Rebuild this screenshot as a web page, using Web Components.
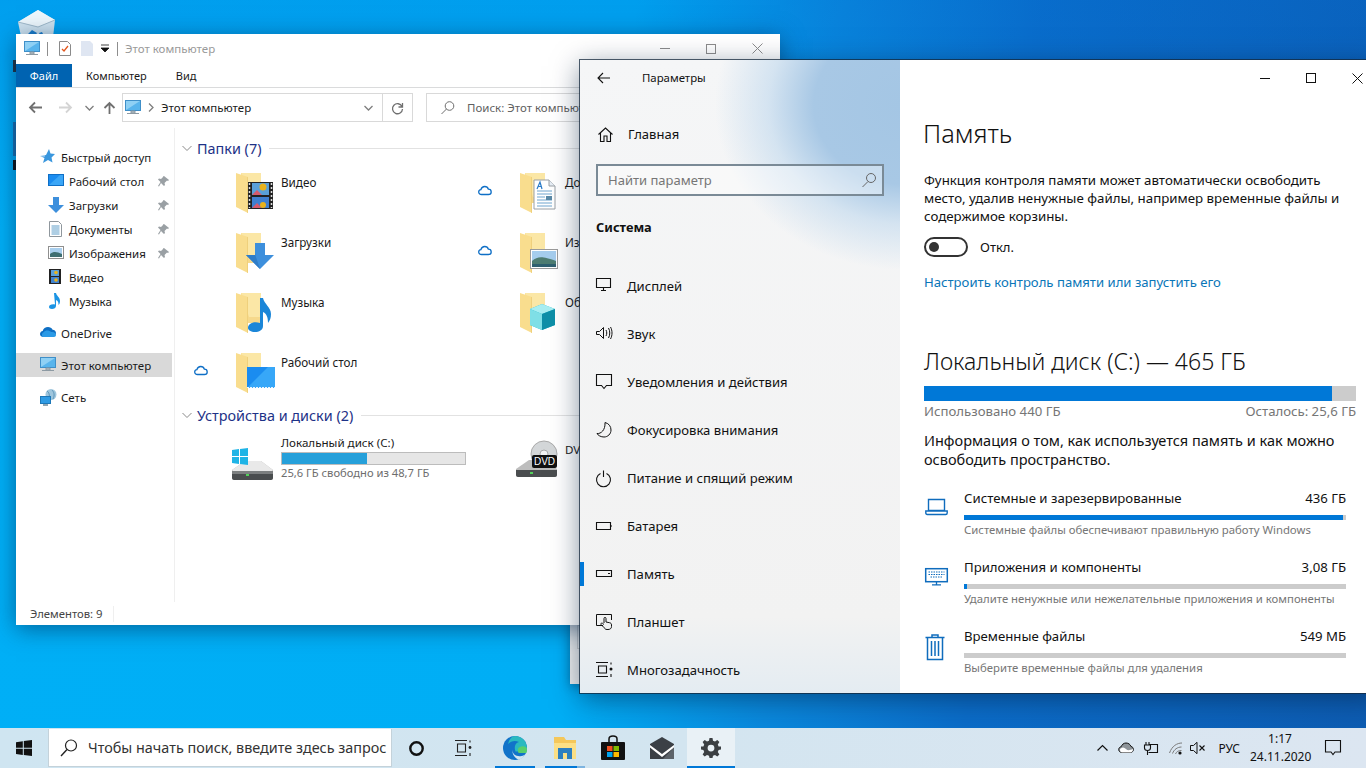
<!DOCTYPE html>
<html lang="ru">
<head>
<meta charset="utf-8">
<title>Параметры</title>
<style>
  html, body { margin: 0; height: 100%; overflow: hidden; }
  body { font-family: "Noto Sans", "Open Sans", sans-serif; }
</style>
</head>
<body>
<win-desktop>
  <explorer-window></explorer-window>
  <settings-window></settings-window>
  <win-taskbar></win-taskbar>
</win-desktop>

<script>
const FOLDER = `
  <path d="M5 0h20v30H5z" fill="#f6d98c"/>
  <path d="M5 0h20v24H13z" fill="#fbe7a6"/>
  <path d="M0 0l12 4v36l-12-6z" fill="#f9dd8e"/>
  <path d="M12 4v36l-1-.5V4z" fill="#efd07c"/>`;

const ICONS = {
  // folders with their overlay, the folder starts at 0,0
  video: `${FOLDER}<rect x="12" y="9" width="25" height="27" fill="#222"/><rect x="16" y="10" width="17" height="12" fill="#5aa0d8"/><rect x="16" y="24" width="17" height="11" fill="#3f7fd0"/><circle cx="27" cy="14" r="3.5" fill="#e9b21c"/><path d="M16 22l5-5 5 5zM16 35l5-5 5 5z" fill="#d65a6c"/><circle cx="27" cy="32" r="3" fill="#e9b21c"/><path d="M13.5 10v25M35.5 10v25" stroke="#ddd" stroke-width="1.5" stroke-dasharray="2 2"/>`,
  download: `${FOLDER}<path d="M19 10h10v12h9L24 36 10 22h9z" fill="#3d8fdc"/><path d="M24 36L10 22h9v-1" fill="#2f7dc8"/>`,
  music: `${FOLDER}<path d="M24 5h3c1 6 8 9 8 16 0 4-1 6-3 9 0-5-1-9-5-11v14c0 4-4 6-8 6s-7-2-7-4c0-4 5-7 12-5z" fill="#1b86d8"/>`,
  desktop: `${FOLDER}<rect x="11" y="14" width="28" height="21" fill="#1a8cf0"/><path d="M11 35L32 14h7v21z" fill="#37a7f8"/><path d="M11 34.500h28" stroke="#e8f4ff" stroke-dasharray="2 1"/>`,
  docs: `${FOLDER}<path d="M14 7h15l6 6v23H14z" fill="#fff" stroke="#9aa0a6"/><path d="M29 7v6h6" fill="#e7eef6" stroke="#9aa0a6"/><path d="M17 18h15M17 21h15M17 24h8M17 27h15M17 30h15M17 33h15" stroke="#6ea5cf"/><rect x="26" y="23" width="6" height="4" fill="#5a8aa8"/><path d="M17 16l3-7 2 7M18 13.500h3" fill="none" stroke="#2a7bc8" stroke-width="1.200"/>`,
  pictures: `${FOLDER}<rect x="10.500" y="16.500" width="27" height="19" fill="#fff" stroke="#9b9b9b"/><rect x="12" y="18" width="24" height="16" fill="#a5cdee"/><path d="M12 28c6-5 10-5 24 0v6H12z" fill="#4e7d72"/><path d="M12 31h24v3H12z" fill="#2f6070"/>`,
  objects: `${FOLDER}<path d="M22 11l13 5v16l-13 5-12-5V16z" fill="#25b5c9"/><path d="M22 11l13 5-13 5-12-5z" fill="#a8eef2"/><path d="M10 16l12 5v16l-12-5z" fill="#7fdfe6"/><path d="M22 21l13-5v16l-13 5z" fill="#0e8fa8"/>`,
  // drives
  drive: `<path d="M1 22L14 13h16l12 9v8c0 1-1 2-2 2H3c-1 0-2-1-2-2z" fill="#b9b9b9"/><path d="M1 22L14 13h16l12 9-1 1H2z" fill="#e9e9e9"/><path d="M1 23h41v7c0 1-1 2-2 2H3c-1 0-2-1-2-2z" fill="#4a4d4f"/><path d="M1 23l41 0v3H1z" fill="#7c7f80"/><rect x="15" y="26" width="3" height="2" fill="#52d05a"/>
    <g fill="#1fb4e6"><path d="M1 2l7-1v7H1zM9 1l8-1v8H9zM1 9h7v7l-7-1zM9 9h8v8l-8-1z"/></g>`,
  dvd: `<path d="M1 29L14 20h16l12 9v6c0 1-1 2-2 2H3c-1 0-2-1-2-2z" fill="#bdbdbd"/><path d="M1 30h41v5c0 1-1 2-2 2H3c-1 0-2-1-2-2z" fill="#4a4d4f"/><rect x="15" y="32" width="3" height="2" fill="#52d05a"/><circle cx="29" cy="14" r="13" fill="#d4d7d9"/><circle cx="29" cy="14" r="13" fill="none" stroke="#aaa"/><circle cx="29" cy="14" r="4" fill="#f4f4f4" stroke="#aaa"/><rect x="17" y="15" width="25" height="13" rx="2" fill="#111"/><text x="29.500" y="25" font-size="10" text-anchor="middle" fill="#fff" font-family="Liberation Sans,sans-serif">DVD</text>`,
  // explorer small
  pc: `<rect x=".5" y=".5" width="15" height="10" fill="#8fd0f4" stroke="#3f8fc8"/><path d="M1 10L15 1v9z" fill="#58b4ec"/><path d="M6 11h4v2H6zM2 13.500h12" stroke="#8d9aa3" fill="#b6c2ca"/>`,
  checkdoc: `<path d="M.5.500h8l3 3v11H.5z" fill="#fff" stroke="#8a8a8a"/><path d="M3 8l2 2 4-5" fill="none" stroke="#e2571e" stroke-width="1.300"/>`,
  fadedoc: `<path d="M0 0h9l3 3v12H0z" fill="#dfe6f2"/>`,
  star: `<path d="M9 0l1.500 4.500L15 5l-3.500 3.500 1 5L8 11l-5 3 1.500-5L0 7l6-1z" fill="#3a97de"/><path d="M0 7h5M0 10h3" stroke="#fff" stroke-width=".7"/>`,
  desk16: `<rect x=".5" y="1.500" width="15" height="11" fill="#1a8cf0" stroke="#0f6fc6"/><path d="M1 12L12 2h3v10z" fill="#3aa6f7"/>`,
  down16: `<path d="M5 0h6v8h5l-8 8-8-8h5z" fill="#3d8fdc"/>`,
  doc16: `<path d="M1.500.500h9l3 3v12h-12z" fill="#fff" stroke="#8f979d"/><path d="M3.500 5h8M3.500 7h8M3.500 9h8M3.500 11h8M3.500 13h8" stroke="#5f9ec9"/>`,
  pic16: `<rect x=".5" y="1.500" width="15" height="12" fill="#fff" stroke="#8f8f8f"/><rect x="2" y="3" width="12" height="9" fill="#a9cfee"/><path d="M2 9c4-3 7-2 12 0v3H2z" fill="#3f6f72"/>`,
  film16: `<rect x="1" y="0" width="12" height="15" fill="#222"/><rect x="3" y="1" width="8" height="6" fill="#5aa0d8"/><rect x="3" y="8" width="8" height="6" fill="#4083cf"/><circle cx="8" cy="3.500" r="1.800" fill="#e9b21c"/><circle cx="8" cy="11" r="1.800" fill="#e9b21c"/>`,
  note16: `<path d="M6 0h2c.5 3 4 4 4 8 0 2-.5 3-1.500 4 0-3-.5-4-2.500-5v6c0 2-2 3-4 3s-3-1-3-2c0-2 2.500-3 6-2.500z" fill="#1b94e4"/>`,
  onedrive: `<path d="M3.500 12C1.500 12 0 10.700 0 9c0-1.500 1.200-2.800 2.700-3C3.300 3.500 5.500 2 8 2c2 0 3.800 1 4.600 2.700C14.600 4.800 16 6.300 16 8c0 2.200-1.800 4-4 4z" fill="#0e6fc4"/><path d="M3 12c-1.500-1-1.500-4 1-5 1-2 5-2 7 0 3-.5 5 1 5 3 0 1-1 2-2 2z" fill="#2b9ae6"/>`,
  network: `<ellipse cx="11" cy="5.500" rx="5.500" ry="5.500" fill="#9fc6dd"/><path d="M7 2c2 1 3 4 2 8M12 1c2 2 3 5 1 9" stroke="#5f96ba" fill="none"/><rect x=".5" y="7.500" width="10" height="7" fill="#2f9be4" stroke="#1d78b8"/><path d="M3 16h5" stroke="#6b8797" stroke-width="1.500"/>`,
  pin: `<path d="M6 1l5 4-1 1-1-.5-2.500 2.500.5 2-1 1L3 8 1 11.500 0 11l2.500-4L0 4.500l1-1 2 .5L5.500 1.500 5 1z" fill="#9aa0a4"/>`,
  cloud: `<path d="M3.500 9.500C1.800 9.500.7 8.400.7 7c0-1.300 1-2.300 2.200-2.400C3.400 2.700 4.900 1.500 6.700 1.500c1.800 0 3.200 1.100 3.700 2.700 1.500 0 2.800 1.200 2.800 2.700s-1.200 2.600-2.800 2.600z" fill="#fff" stroke="#0f6fc6" stroke-width="1.300"/>`,
  // explorer chrome
  back: `<path d="M1 6.500h12M6 1.500l-5 5 5 5" fill="none" stroke="#707070" stroke-width="1.800"/>`,
  fwd: `<path d="M12 6.500H0M7 1.500l5 5-5 5" fill="none" stroke="#d4d4d4" stroke-width="1.800"/>`,
  up: `<path d="M6.500 13V2M1.500 7l5-5 5 5" fill="none" stroke="#707070" stroke-width="1.800"/>`,
  chevdown: `<path d="M.5 1l4 4 4-4" fill="none" stroke="#7e7e7e" stroke-width="1.300"/>`,
  chevright: `<path d="M1 .5l4 4-4 4" fill="none" stroke="#7e7e7e" stroke-width="1.300"/>`,
  sectchev: `<path d="M.5 1l4.500 4.500L9.500 1" fill="none" stroke="#8a8a8a"/>`,
  refresh: `<path d="M11 5.500A5 5 0 1 0 11.500 8M11.500 2v4h-4" fill="none" stroke="#707070" stroke-width="1.300"/>`,
  search: `<circle cx="8.500" cy="5" r="4.300" fill="none" stroke="#6e6e6e"/><path d="M5.500 8L.5 13" stroke="#6e6e6e"/>`,
  qadrop: `<path d="M0 0h8M0 3h8L4 7z" stroke="#111" fill="#111" stroke-width=".8"/>`,
  wmin: `<path d="M0 .5h10" stroke="currentColor"/>`,
  wmax: `<rect x=".5" y=".5" width="9" height="9" fill="none" stroke="currentColor"/>`,
  wclose: `<path d="M.5.500l10 10M10.500.500l-10 10" stroke="currentColor" fill="none"/>`,
  // settings nav
  sback: `<path d="M13 6H1M6 1L1 6l5 5" fill="none" stroke="#111" stroke-width="1.100"/>`,
  home: `<path d="M.5 7.500L7.500 1l7 6.500M2.500 6v8.500h3.500V9h3v5.500h3.500V6" fill="none" stroke="#111" stroke-width="1.100"/>`,
  display: `<path d="M.5.500h14v9H.5zM5 12.500h5M7.500 9.500v3" fill="none" stroke="#111" stroke-width="1.100"/>`,
  sound: `<path d="M.5 5.500h3L7.500 1.500v11l-4-4h-3zM10 4c1 2 1 4 0 6M12.500 2c1.700 3 1.700 7 0 10M14.500 1c2 3.500 2 8.500 0 12" fill="none" stroke="#111"/>`,
  notif: `<path d="M.5.500h15v11h-5l-2.500 3-2.500-3h-5z" fill="none" stroke="#111" stroke-width="1.100"/>`,
  moon: `<path d="M9 .5c4 1 6 4 6 7.500 0 4-3.200 7-7 7-3 0-6-1.500-7-3.500 4 .5 8.500-3.500 8-11z" fill="none" stroke="#111"/>`,
  power: `<path d="M4.500 3.500a7 7 0 1 0 6 0M7.500.5V7" fill="none" stroke="#111" stroke-width="1.100"/>`,
  battery: `<path transform="translate(0 4)" d="M.5.500h14v7H.5zM15 3v2" fill="none" stroke="#111" stroke-width="1.100"/>`,
  storage: `<path transform="translate(0 4)" d="M.5.500h15v6H.5zM12 3.500h2" fill="none" stroke="#111" stroke-width="1.100"/>`,
  tablet: `<path d="M7 11.500H.5V.5h15V6M8 9V4.500c0-1.500 2-1.500 2 0V8l3.500.7c1.500.3 2 1 2 2.300v1.500c0 2-1.500 3-3.500 3h-1c-1.500 0-2.500-1-3-2L5 10.500c-.5-1 .8-2 1.500-1.200L8 10.500" fill="none" stroke="#111"/>`,
  multitask: `<path d="M0 .5h12M0 14.500h12M2.500 4h8v7h-8zM15 .5v2M15 12v3" fill="none" stroke="#111" stroke-width="1.100"/><circle cx="15" cy="7" r="1.500" fill="#111"/>`,
  magn: `<circle cx="9" cy="5" r="4.500" fill="none" stroke="#666"/><path d="M6 8.500L.5 14" stroke="#666"/>`,
  // storage rows
  laptop: `<path d="M3.500.500h16v11h-16zM.8 12h21.400v2c0 .8-.5 1.500-1.500 1.500H2.300c-1 0-1.500-.7-1.500-1.500z" fill="none" stroke="#0f6cbd" stroke-width="1.400"/>`,
  apps: `<rect x=".7" y=".7" width="21.600" height="13" fill="none" stroke="#0f6cbd" stroke-width="1.500"/><path d="M3.500 4h16M3.500 6.500h16M5.500 9h12" stroke="#0f6cbd" stroke-dasharray="1.500 1" stroke-width="1.200"/><path d="M11.500 14v2.500M7 16.800h9" stroke="#0f6cbd" stroke-width="1.300"/>`,
  trash: `<path transform="translate(0 -3)" d="M7 3V1h6v2M.5 3.500h19M2.500 3.500v22h15v-22M6.500 7v15M10 7v15M13.500 7v15" fill="none" stroke="#0f6cbd" stroke-width="1.500"/>`,
  // taskbar
  winlogo: `<path d="M0 2.300L6.800 1.300v6.400H0zM7.800 1.100L16 0v7.700H7.800zM0 8.700h6.800v6.300L0 14zM7.800 8.700H16V16l-8.200-1.100z" fill="#111"/>`,
  tbsearch: `<circle cx="11" cy="6.500" r="5.500" fill="none" stroke="#222" stroke-width="1.200"/><path d="M7 10.500L1 17" stroke="#222" stroke-width="1.400"/>`,
  cortana: `<circle cx="7.500" cy="7.500" r="6.200" fill="none" stroke="#111" stroke-width="2.400"/>`,
  taskview: `<path d="M0 .5h12M0 15.500h12M2.500 4h8v8h-8zM15 .5v2M15 13v3" fill="none" stroke="#222" stroke-width="1.100"/><circle cx="15" cy="7.500" r="1.400" fill="#222"/>`,
  edge: `<circle cx="12" cy="12" r="12" fill="#1173c9"/><path d="M12 0c6.500 0 12 5 12 12.500 0 1-.1 2-.4 3H12.500C11 11 12 7 16 6 12 4 8 5 5 8c1-4.500 4-8 7-8z" fill="#2ab9c0"/><path d="M15 13c1-3 7-4 9-.5 0 1.500-.2 3-.6 4.500H16c-1 0-1.300-2-1-4z" fill="#58cf6c"/><path d="M9.500 13.500c-.5 5 4.500 7.500 9 6.500 1.800-.3 3.200-1 4-2-1.500 3-4 5-7 5.800C11 21 9 18 9.500 13.500z" fill="#d2e5f0"/>`,
  tbfolder: `<path d="M0 0h10l2 3h10v19H0z" fill="#f4c75a"/><path d="M0 6h22v16H0z" fill="#fbdf85"/><rect x="4" y="11" width="14" height="11" fill="#2c7fc0"/><rect x="9" y="16" width="4" height="6" fill="#fbdf85"/>`,
  store: `<path d="M8 6V3c0-4 8-4 8 0v3" fill="none" stroke="#111" stroke-width="1.500"/><rect x="0" y="6" width="24" height="18" rx="1" fill="#111"/><rect x="6" y="10" width="5.500" height="5" fill="#f25022"/><rect x="12.500" y="10" width="5.500" height="5" fill="#7fba00"/><rect x="6" y="16" width="5.500" height="5" fill="#00a4ef"/><rect x="12.500" y="16" width="5.500" height="5" fill="#ffb900"/>`,
  mail: `<path d="M0 7l12-7 12 7v15H0z" fill="#3b4046"/><path d="M0 8l12 9 12-9v2.500L12 20 0 10.500z" fill="#fff"/><path d="M24 10.500V22H13z" fill="#5d6369"/>`,
  gear: `<path d="M8.500 0h3l.5 2.800 2 .8 2.300-1.600 2.100 2.100L16.800 6.400l.8 2 2.400.2v3l-2.400.5-.8 2 1.600 2.300-2.100 2.100-2.300-1.600-2 .8-.5 2.300h-3l-.5-2.300-2-.8-2.300 1.600-2.100-2.100 1.600-2.300-.8-2L0 11.600v-3l2.400-.2.8-2L1.600 4.100l2.100-2.100L6 3.600l2-.8zM10 6.700a3.400 3.400 0 1 0 0 6.800 3.400 3.400 0 0 0 0-6.800z" fill="#3b3f42" fill-rule="evenodd"/>`,
  caret: `<path d="M.5 6.500L5.500 1.500l5 5" fill="none" stroke="#111" stroke-width="1.200"/>`,
  trayCloud: `<path d="M4 10.500C2 10.500 .7 9.200.7 7.500c0-1.500 1.100-2.600 2.500-2.800C3.800 2.600 5.700 1 8 1c2.400 0 4.300 1.400 5 3.500 1.500.2 2.400 1.400 2.400 3 0 1.700-1.300 3-3 3z" fill="#8e9499" stroke="#111"/><path d="M2 7c2-2 4-2 6 0s4 1 7 0c0 2-1 3.500-3 3.500H4C2.500 10.500 2 9 2 7z" fill="#fff"/>`,
  trayPower: `<path d="M5.500 3.500H14.500V11.500H5.500M14.500 6v3M3 1v3M6 1v3" fill="none" stroke="#111" stroke-width="1.100"/><path d="M1.500 4h6v3c0 1.500-1.500 2.500-3 2.500s-3-1-3-2.500zM4.500 9.500V14" fill="none" stroke="#111" stroke-width="1.100"/>`,
  wifi: `<path d="M.5 12C3 5 8 2 13 2M3.500 12.500c1.500-4 5-6.500 9-6.500M6.500 13c1-2.500 3-3.500 6-3.500" fill="none" stroke="#7a7a7a"/><circle cx="11" cy="12" r="1.600" fill="#111"/>`,
  speaker: `<path d="M.5 4.500h3L7 1.300v11.400L3.500 9.500h-3z" fill="none" stroke="#111"/><path d="M9.500 4.500l5 5M14.500 4.500l-5 5" stroke="#111" stroke-width="1.100"/>`,
  action: `<path d="M.5.500h15v11.500H10l-2 2.500L6 12H.5z" fill="none" stroke="#111" stroke-width="1.100"/>`,
  bin: `<path d="M0 12L20 0l17 10-3 26H5z" fill="#cfe2ee"/><path d="M0 12L20 0l17 10-17 7z" fill="#eef7fc"/><path d="M0 12l20 5 17-7" fill="none" stroke="#9fb9c9"/><path d="M9 25l5-5 5 3-2 3-3-2-2 3zM9 29l4 4h7v-3h-6zM21 23l2 4 3-1-2-4z" fill="#1a7ccb"/>`
};

class WinIcon extends HTMLElement {
  constructor() {
    super();
    this.attachShadow({ mode: "open" });
  }

  connectedCallback() {
    const w = this.getAttribute("w") ?? 16;
    const h = this.getAttribute("h") ?? w;
    const name = this.getAttribute("name");
    this.shadowRoot.innerHTML = `
      <style>
        :host { display: block; width: ${w}px; height: ${h}px; flex: none; }
        svg { display: block; overflow: visible; }
      </style>
      <svg width="${w}" height="${h}" viewBox="0 0 ${w} ${h}">${ICONS[name] ?? ""}</svg>`;
  }
}
customElements.define("win-icon", WinIcon);

const desktopTemplate = document.createElement("template");
desktopTemplate.innerHTML = `
  <style>
    :host {
      display: block;
      position: relative;
      width: 1366px;
      height: 768px;
      overflow: hidden;
      background:
        linear-gradient(180deg, rgba(0,110,215,.25) 0, rgba(0,110,215,0) 30%),
        linear-gradient(96deg, #00aff6 0%, #00aef5 44%, #0a88dc 58%, #0b6cc8 72%, #0d5cb2 100%);
    }
    .bin { position: absolute; left: 18px; top: 10px; }
    .stub { position: absolute; left: 13px; width: 3px; background: #234; }
    .behind { position: absolute; left: 570px; top: 560px; width: 60px; height: 124px; background: #f0f0f0; box-shadow: 0 2px 10px rgba(0,30,60,.4); }
    .behind div { position: absolute; left: 7px; top: 65px; width: 30px; height: 22px; border: 1px solid #d0d0d0; }
  </style>
  <win-icon class="bin" name="bin" w="38" h="36"></win-icon>
  <div class="stub" style="top:60px;height:12px"></div>
  <div class="stub" style="top:122px;height:34px;background:#1a6fb0"></div>
  <div class="stub" style="top:160px;height:10px;background:#111"></div>
  <div class="behind"><div></div></div>
  <slot></slot>
`;

class WinDesktop extends HTMLElement {
  constructor() {
    super();
    this.attachShadow({ mode: "open" }).appendChild(desktopTemplate.content.cloneNode(true));
  }
}
customElements.define("win-desktop", WinDesktop);

const sideItemTemplate = document.createElement("template");
sideItemTemplate.innerHTML = `
  <style>
    :host {
      display: flex;
      align-items: center;
      height: 24px;
      font-size: 11.500px;
      color: #1a1a1a;
    }
    :host([selected]) { background: #d9d9d9; }
    .ic { width: 18px; display: flex; justify-content: center; }
    .tx { flex: 1; white-space: nowrap; margin-left: 4px; }
    .pin { margin-right: 2px; }
  </style>
  <span class="ic"></span><span class="tx"><slot></slot></span>
`;

class SideItem extends HTMLElement {
  constructor() {
    super();
    this.attachShadow({ mode: "open" }).appendChild(sideItemTemplate.content.cloneNode(true));
  }

  connectedCallback() {
    const sub = this.hasAttribute("sub");
    this.style.paddingLeft = sub ? "31px" : "23px";
    const icon = document.createElement("win-icon");
    icon.setAttribute("name", this.getAttribute("icon"));
    this.shadowRoot.querySelector(".ic").appendChild(icon);
    if (this.hasAttribute("pinned")) {
      const pin = document.createElement("win-icon");
      pin.setAttribute("name", "pin");
      pin.setAttribute("w", "12");
      pin.className = "pin";
      this.shadowRoot.appendChild(pin);
    }
  }
}
customElements.define("side-item", SideItem);

const folderTemplate = document.createElement("template");
folderTemplate.innerHTML = `
  <style>
    :host { display: flex; height: 40px; font-size: 11.700px; color: #1a1a1a; white-space: nowrap; }
    .cloud { width: 42px; padding-top: 12px; box-sizing: border-box; }
    .name { margin-left: 0; line-height: 18px; }
    .box { width: 45px; }
  </style>
  <div class="cloud"></div><div class="box"></div><div class="name"><slot></slot></div>
`;

class FolderItem extends HTMLElement {
  constructor() {
    super();
    this.attachShadow({ mode: "open" }).appendChild(folderTemplate.content.cloneNode(true));
  }

  connectedCallback() {
    const icon = document.createElement("win-icon");
    icon.setAttribute("name", this.getAttribute("kind"));
    icon.setAttribute("w", "42");
    icon.setAttribute("h", "40");
    this.shadowRoot.querySelector(".box").appendChild(icon);
    if (this.hasAttribute("cloud")) {
      const cloud = document.createElement("win-icon");
      cloud.setAttribute("name", "cloud");
      cloud.setAttribute("w", "14");
      cloud.setAttribute("h", "11");
      this.shadowRoot.querySelector(".cloud").appendChild(cloud);
    }
  }
}
customElements.define("folder-item", FolderItem);

const sectionTemplate = document.createElement("template");
sectionTemplate.innerHTML = `
  <style>
    :host {
      display: flex;
      align-items: center;
      height: 20px;
      margin-left: 7px;
      font-size: 14.400px;
      color: #1e3287;
      white-space: nowrap;
    }
    .t { margin-left: 5px; }
    .line { flex: 1; height: 1px; background: #e2e2e2; margin-left: 8px; }
  </style>
  <win-icon name="sectchev" w="10" h="7"></win-icon>
  <span class="t"><slot></slot></span>
  <span class="line"></span>
`;

class SectionHead extends HTMLElement {
  constructor() {
    super();
    this.attachShadow({ mode: "open" }).appendChild(sectionTemplate.content.cloneNode(true));
  }
}
customElements.define("section-head", SectionHead);

const explorerTemplate = document.createElement("template");
explorerTemplate.innerHTML = `
  <style>
    :host {
      display: flex;
      flex-direction: column;
      position: absolute;
      left: 16px;
      top: 34px;
      width: 764px;
      height: 591px;
      background: #fff;
      box-shadow: 0 4px 22px rgba(0,40,80,.55);
      font-size: 11.500px;
      color: #1a1a1a;
    }
    .title { display: flex; align-items: center; height: 29px; margin-bottom: 1px; padding-left: 8px; flex: none; }
    .sep { width: 1px; height: 14px; background: #8e8e8e; }
    .title-text { margin-left: 7px; color: #9a9a9a; flex: 1; }
    .wctl { width: 46px; display: flex; justify-content: center; color: #8c8c8c; }
    .tabs { display: flex; height: 23px; flex: none; border-bottom: 1px solid #dadbdc; font-size: 11px; }
    .tab { display: flex; align-items: center; }
    .tab.file { width: 56px; justify-content: center; background: #0063b1; color: #fff; }
    .nav { display: flex; align-items: center; height: 29px; margin-top: 5px; flex: none; }
    .addr { display: flex; align-items: center; width: 259px; height: 27px; margin-left: 6px; border: 1px solid #d9d9d9; }
    .addr-text { flex: 1; margin-left: 7px; }
    .refresh { display: flex; justify-content: center; align-items: center; width: 29px; height: 27px; border: 1px solid #d9d9d9; border-left: 0; }
    .searchbox { display: flex; align-items: center; width: 340px; height: 27px; margin-left: 13px; border: 1px solid #d9d9d9; color: #5f5f5f; }
    .body { display: flex; flex: 1; margin-top: 6px; min-height: 0; }
    .side { width: 156px; padding-top: 17px; box-sizing: border-box; flex: none; }
    .gap { height: 8px; }
    .content { flex: 1; margin-left: 2px; border-left: 1px solid #efefef; padding-top: 10px; min-width: 0; }
    .grid { display: grid; grid-template-columns: 284px 284px; row-gap: 20px; margin: 15px 0 12px 19px; }
    .devices { display: flex; margin: 10px 0 0 56px; }
    .dev { display: flex; white-space: nowrap; }
    .dev .pad { width: 50px; }
    .devname { line-height: 16px; font-size: 11.600px; }
    .bar { width: 183px; height: 11px; margin-top: 1px; border: 1px solid #bcbcbc; background: #e6e6e6; }
    .fill { width: 85px; height: 100%; background: #26a0da; }
    .free { line-height: 16px; color: #6d6d6d; font-size: 11.200px; }
    .status { display: flex; align-items: center; height: 23px; flex: none; padding-left: 14px; color: #444; font-size: 11.300px; }
    .status i { width: 1px; height: 16px; background: #efefef; margin-left: 10px; }
  </style>
  <div class="title">
    <win-icon name="pc"></win-icon>
    <div class="sep" style="margin-left:7px"></div>
    <win-icon name="checkdoc" w="12" h="15" style="margin-left:11px"></win-icon>
    <win-icon name="fadedoc" w="12" h="15" style="margin-left:10px"></win-icon>
    <win-icon name="qadrop" w="8" h="7" style="margin-left:8px"></win-icon>
    <div class="sep" style="margin-left:8px"></div>
    <div class="title-text">Этот компьютер</div>
    <div class="wctl"><win-icon name="wmin" w="10" h="1"></win-icon></div>
    <div class="wctl"><win-icon name="wmax" w="10"></win-icon></div>
    <div class="wctl"><win-icon name="wclose" w="11"></win-icon></div>
  </div>
  <div class="tabs">
    <div class="tab file">Файл</div>
    <div class="tab" style="margin-left:14px">Компьютер</div>
    <div class="tab" style="margin-left:29px">Вид</div>
  </div>
  <div class="nav">
    <win-icon name="back" w="13" style="margin-left:13px"></win-icon>
    <win-icon name="fwd" w="13" style="margin-left:17px"></win-icon>
    <win-icon name="chevdown" w="9" h="6" style="margin-left:13px"></win-icon>
    <win-icon name="up" w="13" h="14" style="margin-left:9px"></win-icon>
    <div class="addr">
      <win-icon name="pc" style="margin-left:2px"></win-icon>
      <win-icon name="chevright" w="6" h="9" style="margin-left:7px"></win-icon>
      <span class="addr-text">Этот компьютер</span>
      <win-icon name="chevdown" w="9" h="6" style="margin-right:9px"></win-icon>
    </div>
    <div class="refresh"><win-icon name="refresh" w="13"></win-icon></div>
    <div class="searchbox">
      <win-icon name="search" w="14" style="margin-left:14px"></win-icon>
      <span style="margin-left:12px">Поиск: Этот компьютер</span>
    </div>
  </div>
  <div class="body">
    <div class="side">
      <side-item icon="star">Быстрый доступ</side-item>
      <side-item sub pinned icon="desk16">Рабочий стол</side-item>
      <side-item sub pinned icon="down16">Загрузки</side-item>
      <side-item sub pinned icon="doc16">Документы</side-item>
      <side-item sub pinned icon="pic16">Изображения</side-item>
      <side-item sub icon="film16">Видео</side-item>
      <side-item sub icon="note16">Музыка</side-item>
      <div class="gap"></div>
      <side-item icon="onedrive">OneDrive</side-item>
      <div class="gap"></div>
      <side-item selected icon="pc">Этот компьютер</side-item>
      <div class="gap"></div>
      <side-item icon="network">Сеть</side-item>
    </div>
    <div class="content">
      <section-head>Папки (7)</section-head>
      <div class="grid">
        <folder-item kind="video">Видео</folder-item>
        <folder-item kind="docs" cloud>Документы</folder-item>
        <folder-item kind="download">Загрузки</folder-item>
        <folder-item kind="pictures" cloud>Изображения</folder-item>
        <folder-item kind="music">Музыка</folder-item>
        <folder-item kind="objects">Объемные объекты</folder-item>
        <folder-item kind="desktop" cloud>Рабочий стол</folder-item>
      </div>
      <section-head>Устройства и диски (2)</section-head>
      <div class="devices">
        <div class="dev" style="width:284px">
          <div class="pad"><win-icon name="drive" w="43" h="33" style="margin-top:13px"></win-icon></div>
          <div>
            <div class="devname">Локальный диск (C:)</div>
            <div class="bar"><div class="fill"></div></div>
            <div class="free">25,6 ГБ свободно из 48,7 ГБ</div>
          </div>
        </div>
        <div class="dev">
          <div class="pad"><win-icon name="dvd" w="43" h="38" style="margin-top:5px"></win-icon></div>
          <div class="devname" style="margin-top:7px">DVD-дисковод (D:)</div>
        </div>
      </div>
    </div>
  </div>
  <div class="status">Элементов: 9<i></i></div>
`;

class ExplorerWindow extends HTMLElement {
  constructor() {
    super();
    this.attachShadow({ mode: "open" }).appendChild(explorerTemplate.content.cloneNode(true));
  }
}
customElements.define("explorer-window", ExplorerWindow);

const navItemTemplate = document.createElement("template");
navItemTemplate.innerHTML = `
  <style>
    :host { display: flex; align-items: center; height: 48px; position: relative; font-size: 13.100px; color: #111; padding-left: 16px; white-space: nowrap; }
    .ic { width: 31px; display: flex; }
    :host([active])::before { content: ""; position: absolute; left: 0; top: 12px; width: 4px; height: 24px; background: #0078d7; }
  </style>
  <span class="ic"></span><slot></slot>
`;

class NavItem extends HTMLElement {
  constructor() {
    super();
    this.attachShadow({ mode: "open" }).appendChild(navItemTemplate.content.cloneNode(true));
  }

  connectedCallback() {
    const icon = document.createElement("win-icon");
    icon.setAttribute("name", this.getAttribute("icon"));
    icon.setAttribute("w", "17");
    this.shadowRoot.querySelector(".ic").appendChild(icon);
  }
}
customElements.define("nav-item", NavItem);

const storageRowTemplate = document.createElement("template");
storageRowTemplate.innerHTML = `
  <style>
    :host { display: flex; height: 69px; padding-right: 10px; }
    .ic { width: 40px; padding: 10px 0 0 1px; box-sizing: border-box; flex: none; }
    .main { flex: 1; }
    .top { display: flex; justify-content: space-between; font-size: 13.200px; line-height: 19px; color: #111; }
    .track { height: 5px; margin-top: 7px; background: #ccc; }
    .used { height: 100%; background: #0078d7; }
    .sub { font-size: 11.350px; line-height: 17px; margin-top: 1px; color: #767676; white-space: nowrap; }
  </style>
  <div class="ic"></div>
  <div class="main">
    <div class="top"><span><slot name="title"></slot></span><span><slot name="size"></slot></span></div>
    <div class="track"><div class="used"></div></div>
    <div class="sub"><slot name="sub"></slot></div>
  </div>
`;

class StorageRow extends HTMLElement {
  constructor() {
    super();
    this.attachShadow({ mode: "open" }).appendChild(storageRowTemplate.content.cloneNode(true));
  }

  connectedCallback() {
    const icon = document.createElement("win-icon");
    icon.setAttribute("name", this.getAttribute("icon"));
    icon.setAttribute("w", "24");
    icon.setAttribute("h", "24");
    this.shadowRoot.querySelector(".ic").appendChild(icon);
    this.shadowRoot.querySelector(".used").style.width = this.getAttribute("used");
  }
}
customElements.define("storage-row", StorageRow);

const settingsTemplate = document.createElement("template");
settingsTemplate.innerHTML = `
  <style>
    :host {
      display: grid;
      grid-template-columns: 320px 480px;
      position: absolute;
      left: 580px;
      top: 60px;
      width: 800px;
      height: 633px;
      box-sizing: border-box;
      outline: 1px solid rgba(20,40,60,.75);
      box-shadow: 0 6px 26px rgba(0,30,60,.5);
      color: #111;
    }
    .left {
      overflow: hidden;
      padding-top: 0;
      background:
        radial-gradient(ellipse 190px 165px at 325px 45px, #a4c6e4 0, #a8c8e5 48%, rgba(195,218,238,.65) 72%, rgba(240,242,244,0) 100%),
        linear-gradient(180deg, #f5f6f7 0, #f2f2f2 88%, #e4ecf2 100%);
    }
    .stitle { display: flex; align-items: center; height: 35px; padding-left: 17px; font-size: 11.400px; }
    .stitle span { margin-left: 31px; }
    .home { display: flex; align-items: center; height: 48px; margin-top: 15px; padding-left: 18px; font-size: 13px; }
    .home span { margin-left: 15px; }
    .find { display: flex; align-items: center; justify-content: space-between; height: 32px; margin: 6px 16px 0; box-sizing: border-box; border: 2px solid #7a8a96; padding: 0 6px 0 10px; font-size: 13px; color: #767676; background: rgba(255,255,255,.4); }
    .sys { height: 38px; margin: 12px 0 16px 16px; line-height: 38px; font-size: 12.800px; font-weight: 700; }
    .right { background: #fff; padding: 0 24px; overflow: hidden; }
    .ctl { display: flex; justify-content: flex-end; height: 36px; align-items: center; margin-right: -24px; color: #111; }
    .ctl div { width: 46px; display: flex; justify-content: center; }
    h1 { margin: 17px 0 0 -1px; font-weight: 300; font-size: 25.400px; line-height: 40px; }
    p { margin: 18px 0 0; font-size: 13.300px; line-height: 18px; }
    .toggle { display: flex; align-items: center; height: 20px; margin-top: 12px; font-size: 13px; }
    .pill { display: flex; align-items: center; width: 44px; height: 20px; box-sizing: border-box; border: 2px solid #333; border-radius: 10px; padding-left: 3px; }
    .knob { width: 10px; height: 10px; border-radius: 50%; background: #333; }
    .link { margin-top: 16px; font-size: 13.130px; line-height: 18px; color: #0a76b8; }
    h2 { margin: 54px 0 0; font-weight: 300; font-size: 23px; line-height: 32px; white-space: nowrap; }
    .disk { height: 15px; margin-top: 9px; background: #ccc; }
    .disk div { width: 408px; height: 100%; background: #0078d7; }
    .labels { display: flex; justify-content: space-between; margin-top: 2px; font-size: 13.200px; line-height: 17px; color: #767676; }
    .info { margin: 11px 0 20px; line-height: 19px; font-size: 14.500px; }
  </style>
  <div class="left">
    <div class="stitle"><win-icon name="sback" w="14" h="12"></win-icon><span>Параметры</span></div>
    <div class="home"><win-icon name="home" w="15"></win-icon><span>Главная</span></div>
    <div class="find"><span>Найти параметр</span><win-icon name="magn" w="14"></win-icon></div>
    <div class="sys">Система</div>
    <nav-item icon="display">Дисплей</nav-item>
    <nav-item icon="sound">Звук</nav-item>
    <nav-item icon="notif">Уведомления и действия</nav-item>
    <nav-item icon="moon">Фокусировка внимания</nav-item>
    <nav-item icon="power">Питание и спящий режим</nav-item>
    <nav-item icon="battery">Батарея</nav-item>
    <nav-item active icon="storage">Память</nav-item>
    <nav-item icon="tablet">Планшет</nav-item>
    <nav-item icon="multitask">Многозадачность</nav-item>
  </div>
  <div class="right">
    <div class="ctl">
      <div><win-icon name="wmin" w="10" h="1"></win-icon></div>
      <div><win-icon name="wmax" w="10"></win-icon></div>
      <div><win-icon name="wclose" w="11"></win-icon></div>
    </div>
    <h1>Память</h1>
    <p>Функция контроля памяти может автоматически освободить место, удалив ненужные файлы, например временные файлы и содержимое корзины.</p>
    <div class="toggle"><div class="pill"><div class="knob"></div></div><span style="margin-left:12px">Откл.</span></div>
    <div class="link">Настроить контроль памяти или запустить его</div>
    <h2>Локальный диск (C:) — 465 ГБ</h2>
    <div class="disk"><div></div></div>
    <div class="labels"><span>Использовано 440 ГБ</span><span>Осталось: 25,6 ГБ</span></div>
    <p class="info">Информация о том, как используется память и как можно освободить пространство.</p>
    <storage-row icon="laptop" used="99.200%">
      <span slot="title">Системные и зарезервированные</span><span slot="size">436 ГБ</span>
      <span slot="sub">Системные файлы обеспечивают правильную работу Windows</span>
    </storage-row>
    <storage-row icon="apps" used="0.800%">
      <span slot="title">Приложения и компоненты</span><span slot="size">3,08 ГБ</span>
      <span slot="sub">Удалите ненужные или нежелательные приложения и компоненты</span>
    </storage-row>
    <storage-row icon="trash" used="0%">
      <span slot="title">Временные файлы</span><span slot="size">549 МБ</span>
      <span slot="sub">Выберите временные файлы для удаления</span>
    </storage-row>
  </div>
`;

class SettingsWindow extends HTMLElement {
  constructor() {
    super();
    this.attachShadow({ mode: "open" }).appendChild(settingsTemplate.content.cloneNode(true));
  }
}
customElements.define("settings-window", SettingsWindow);

const taskbarTemplate = document.createElement("template");
taskbarTemplate.innerHTML = `
  <style>
    :host {
      display: flex;
      align-items: center;
      position: absolute;
      left: 0;
      right: 0;
      bottom: 0;
      height: 40px;
      background: linear-gradient(90deg, #cfe5f1 0, #d3e5f0 50%, #dce6f1 100%);
      color: #111;
      font-size: 12px;
    }
    .search { display: flex; align-items: center; width: 344px; height: 38px; margin-left: 16px; box-sizing: border-box; background: #fff; border: 1px solid #c4d2da; border-top: 0; font-size: 14.400px; color: #333; white-space: nowrap; overflow: hidden; }
    .app { position: relative; display: flex; align-items: center; justify-content: center; height: 40px; width: 48px; flex: none; }
    .app.open::after { content: ""; position: absolute; left: 4px; right: 4px; bottom: 0; height: 2px; background: #0078d7; }
    .app.multi::after { background: linear-gradient(90deg, #0078d7 80%, #7db4e0 80%); }
    .app.cur { background: #e9f1f6; }
    .app.cur::after { left: 0; right: 0; }
    .tray { display: flex; align-items: center; margin-left: auto; }
    .clock { width: 60px; text-align: center; line-height: 18px; margin-left: 10px; }
  </style>
  <win-icon name="winlogo" style="margin-left:16px"></win-icon>
  <div class="search">
    <win-icon name="tbsearch" w="18" style="margin-left:11px"></win-icon>
    <span style="margin-left:10px">Чтобы начать поиск, введите здесь запрос</span>
  </div>
  <win-icon name="cortana" w="15" style="margin-left:17px"></win-icon>
  <win-icon name="taskview" w="17" h="16" style="margin-left:31px"></win-icon>
  <div class="app open" style="margin-left:19px"><win-icon name="edge" w="24"></win-icon></div>
  <div class="app open multi" style="margin-left:2px"><win-icon name="tbfolder" w="22" h="22"></win-icon></div>
  <div class="app"><win-icon name="store" w="24"></win-icon></div>
  <div class="app" style="margin-left:1px"><win-icon name="mail" w="24" h="22"></win-icon></div>
  <div class="app open cur" style="margin-left:1px"><win-icon name="gear" w="20"></win-icon></div>
  <div class="tray">
    <win-icon name="caret" w="11" h="8"></win-icon>
    <win-icon name="trayCloud" w="16" h="12" style="margin-left:10px"></win-icon>
    <win-icon name="trayPower" w="15" style="margin-left:9px"></win-icon>
    <win-icon name="wifi" w="13" h="14" style="margin-left:11px"></win-icon>
    <win-icon name="speaker" w="15" h="14" style="margin-left:8px"></win-icon>
    <span style="margin-left:13px">РУС</span>
    <div class="clock">1:17<br>24.11.2020</div>
    <win-icon name="action" style="margin:0 25px 0 15px"></win-icon>
  </div>
`;

class WinTaskbar extends HTMLElement {
  constructor() {
    super();
    this.attachShadow({ mode: "open" }).appendChild(taskbarTemplate.content.cloneNode(true));
  }
}
customElements.define("win-taskbar", WinTaskbar);
</script>
</body>
</html>
